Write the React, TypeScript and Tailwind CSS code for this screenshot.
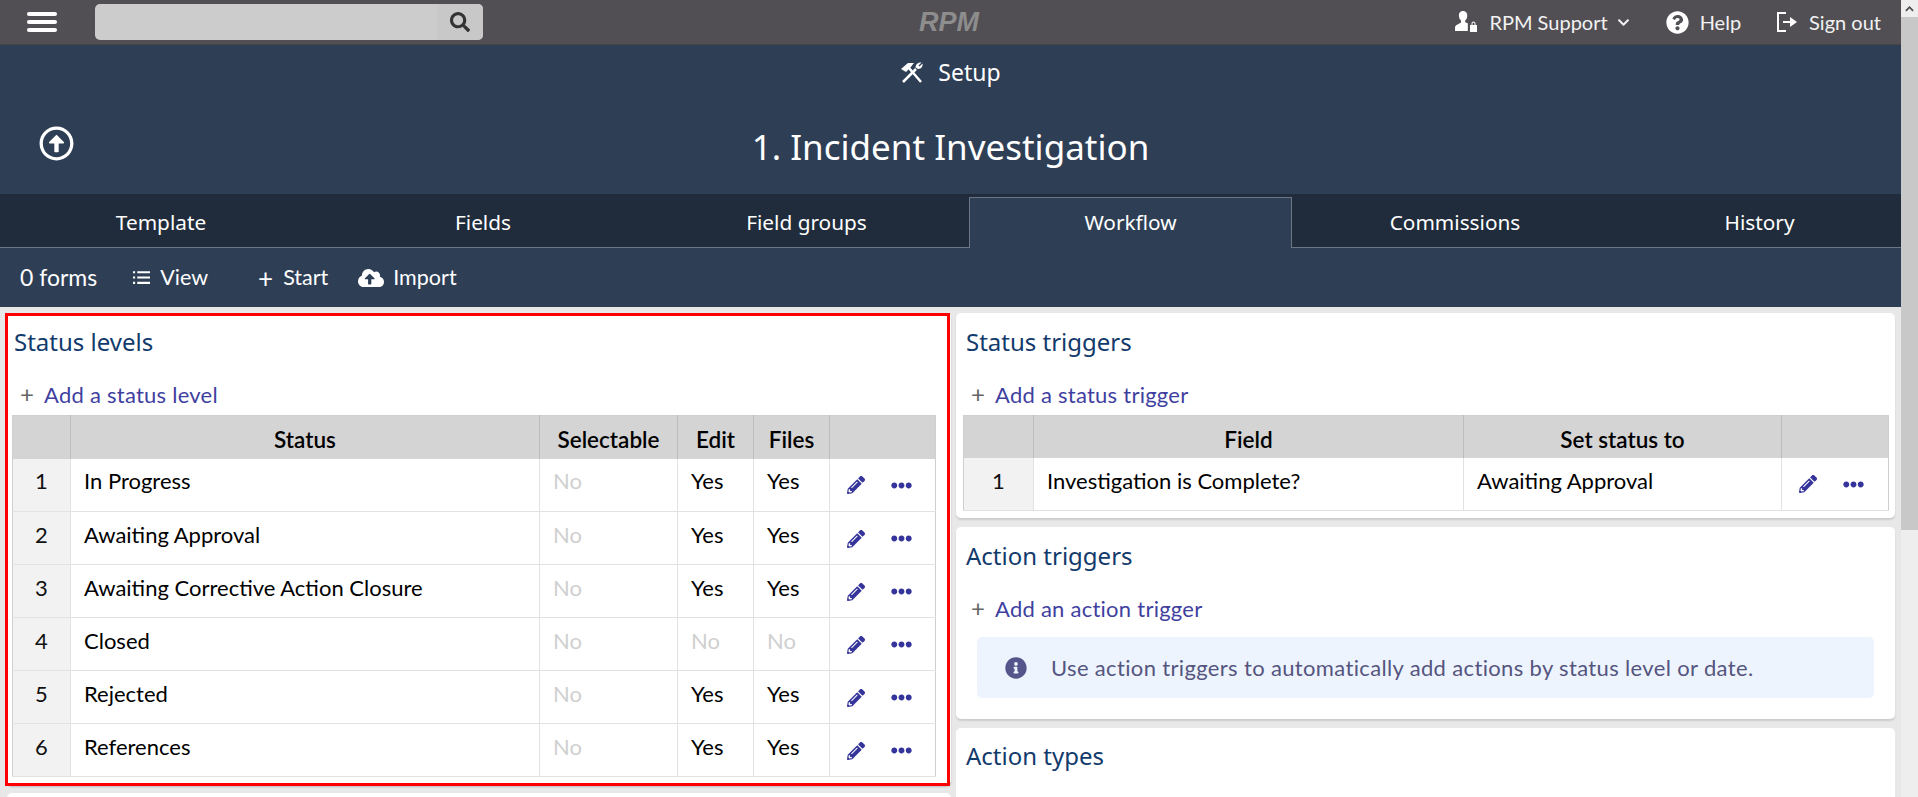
import React from 'react';
import {
  FaSearch,
  FaRegArrowAltCircleUp,
  FaQuestionCircle,
  FaChevronDown,
  FaCloudUploadAlt,
  FaInfoCircle,
  FaEllipsisH,
  FaPencilAlt,
} from 'react-icons/fa';

const tabs = ['Template', 'Fields', 'Field groups', 'Workflow', 'Commissions', 'History'];

const levels = [
  { name: 'In Progress', edit: 'Yes', files: 'Yes' },
  { name: 'Awaiting Approval', edit: 'Yes', files: 'Yes' },
  { name: 'Awaiting Corrective Action Closure', edit: 'Yes', files: 'Yes' },
  { name: 'Closed', edit: 'No', files: 'No' },
  { name: 'Rejected', edit: 'Yes', files: 'Yes' },
  { name: 'References', edit: 'Yes', files: 'Yes' },
];

const YesNo = ({ value }: { value: string }) => (
  <td className={`border-r border-b border-[#e2e2e2] pl-[13px] pb-[8px] ${value === 'No' ? 'text-[#cfcfcf]' : 'text-black'}`}>{value}</td>
);

const RowActions = () => (
  <td className="border-b border-[#e2e2e2]">
    <div className="flex items-center pl-[17px] pt-[1px] text-[#34349a]">
      <FaPencilAlt className="w-[18px] h-[18px]" />
      <FaEllipsisH className="w-[21px] h-[21px] ml-[26px]" />
    </div>
  </td>
);

const AddLink = ({ label }: { label: string }) => (
  <div className="flex items-center h-[28px] pl-[8px] text-[22px] tracking-[0.25px] text-[#3f3f9f]">
    <span className="text-[#666] w-[24px] text-[24px] leading-none">+</span>
    {label}
  </div>
);

const PanelTitle = ({ children }: { children: React.ReactNode }) => (
  <h2 className="text-[24px] leading-[30px] text-[#123a6b] font-['Noto_Sans',sans-serif]">{children}</h2>
);

const HeadCell = ({ children, className = '' }: { children?: React.ReactNode; className?: string }) => (
  <th className={`border-r border-[#bdbdbd] font-semibold text-center text-[22.500px] text-black pt-[6px] ${className}`}>{children}</th>
);

const App = () => {
  return (
    <div className="flex h-[797px] overflow-hidden bg-[#e8e8e8] font-['Lato',sans-serif]">
      <div className="w-[1901px] shrink-0">
        {/* top bar */}
        <div className="flex items-center h-[45px] bg-[#514f54] border-b border-[#444] text-[#f2f2f2] text-[20px]">
          <div className="flex flex-col gap-[4px] w-[30px] ml-[27px]">
            <span className="h-[4px] rounded bg-white" />
            <span className="h-[4px] rounded bg-white" />
            <span className="h-[4px] rounded bg-white" />
          </div>
          <div className="flex ml-[38px] w-[388px] h-[36px] rounded-[5px] bg-[#cccccc] overflow-hidden">
            <div className="flex-1" />
            <div className="flex items-center justify-center w-[46px] bg-[#c8c8c8] text-[#333]">
              <FaSearch className="w-[20px] h-[20px]" />
            </div>
          </div>
          <div className="ml-[436px] w-[54px] text-center font-['Liberation_Sans',sans-serif] italic font-bold text-[27px] text-[#8d8d8d]">RPM</div>
          <div className="flex items-center ml-auto">
            <svg viewBox="0 0 24 24" className="w-[24px] h-[24px] fill-white">
              <path d="M9 1c3 0 4.600 2.400 4.200 5.400-.2 1.800-1 3.200-2 4.100v1.700l2.600 1.100V21H1v-3.200c0-1.700 1-2.800 2.600-3.400l3.400-1.800v-2.100c-1-.9-1.800-2.300-2-4.100C4.600 3.400 6 1 9 1z" />
              <path d="M16 15h7v7h-7zM17.500 15v-1.500a2 2 0 0 1 4 0V15h-1v-1.500a1 1 0 0 0-2 0V15z" />
            </svg>
            <span className="ml-[11px]">RPM Support</span>
            <FaChevronDown className="w-[13px] h-[13px] ml-[9px]" />
            <FaQuestionCircle className="w-[23px] h-[23px] ml-[36px] text-white" />
            <span className="ml-[11px]">Help</span>
            <svg viewBox="0 0 24 24" className="w-[24px] h-[24px] ml-[34px] fill-none stroke-white stroke-2">
              <path d="M11 3H3v18h8M8 12h8" />
              <path d="M15 7l7 5-7 5z" className="fill-white stroke-none" />
            </svg>
            <span className="ml-[10px] mr-[20px]">Sign out</span>
          </div>
        </div>

        {/* title */}
        <div className="relative h-[149px] bg-[#2e3e55] text-white font-['Noto_Sans',sans-serif]">
          <div className="flex items-center justify-center gap-[14px] pt-[10px] text-[23px]">
            <svg viewBox="0 0 24 24" className="w-[24px] h-[24px] fill-none stroke-white stroke-[2.500]">
              <path d="M21 22L9 8M3 22L16 9" />
              <path d="M1 9l7-6 6 0-4 5-4 4z" className="fill-white stroke-none" />
              <path d="M21.500 2.500l-3 3 1 1 3-3c.5 2.500-1 5.500-4.500 5.500L15.500 7.500C15.500 4 19 2 21.500 2.500z" className="fill-white stroke-none" />
            </svg>
            Setup
          </div>
          <FaRegArrowAltCircleUp className="absolute left-[39px] top-[81px] w-[35px] h-[35px]" />
          <h1 className="text-center text-[35px] leading-[50px] mt-[32px]">1. Incident Investigation</h1>
        </div>

        {/* tabs */}
        <div className="grid grid-cols-[322px_322px_325px_323px_326px_283px] h-[54px] bg-[#202c3b] border-b border-[#6c7684] text-white text-[20.800px] font-['Noto_Sans',sans-serif]">
          {tabs.map((tab) => (
            <div
              key={tab}
              className={`flex items-center justify-center ${tab === 'Workflow' ? 'bg-[#2e3e55] border border-b-0 border-[#6c7684] mt-[3px] -mb-px' : 'pt-[4px]'}`}
            >
              {tab}
            </div>
          ))}
        </div>

        {/* toolbar */}
        <div className="flex items-center h-[59px] bg-[#2e3e55] text-white text-[21.500px]">
          <span className="ml-[20px] text-[23px]">0 forms</span>
          <svg viewBox="0 0 16 12" className="w-[17px] h-[13px] ml-[36px] fill-white">
            <path d="M0 0h2v2H0zM4 0h12v2H4zM0 5h2v2H0zM4 5h12v2H4zM0 10h2v2H0zM4 10h12v2H4z" />
          </svg>
          <span className="ml-[10px]">View</span>
          <span className="ml-[50px] text-[26px] leading-none">+</span>
          <span className="ml-[10px]">Start</span>
          <FaCloudUploadAlt className="w-[26px] h-[26px] ml-[30px]" />
          <span className="ml-[9px]">Import</span>
        </div>

        {/* panels */}
        <div className="grid grid-cols-[944px_939px] gap-x-[5px] px-[7px] pt-[6px] text-[22px]">
          <div className="flex flex-col gap-[8px]">
            <div className="relative h-[472px] bg-white rounded-[5px] px-[5px] pt-[14px] shadow-[0_2px_2px_#bbb]">
              <div className="absolute -left-[2px] top-0 w-[945px] h-[473px] border-[3px] border-[#ff0000] pointer-events-none" />
              <div className="pl-[2px]"><PanelTitle>Status levels</PanelTitle></div>
              <div className="mt-[23px]"><AddLink label="Add a status level" /></div>
              <table className="table-fixed w-[923px] mt-[7px] border border-[#cfcfcf] border-collapse">
                <thead>
                  <tr className="h-[43px] bg-[#d4d4d4]">
                    <HeadCell className="w-[58px]" />
                    <HeadCell className="w-[469px]">Status</HeadCell>
                    <HeadCell className="w-[138px]">Selectable</HeadCell>
                    <HeadCell className="w-[76px]">Edit</HeadCell>
                    <HeadCell className="w-[76px]">Files</HeadCell>
                    <th className="w-[106px]" />
                  </tr>
                </thead>
                <tbody>
                  {levels.map((level, index) => (
                    <tr key={level.name} className="h-[53px]">
                      <td className="bg-[#f2f2f2] text-center border-r border-b border-[#e2e2e2] text-[#111] pb-[8px]">{index + 1}</td>
                      <td className="pl-[13px] pb-[8px] border-r border-b border-[#e2e2e2] text-black">{level.name}</td>
                      <YesNo value="No" />
                      <YesNo value={level.edit} />
                      <YesNo value={level.files} />
                      <RowActions />
                    </tr>
                  ))}
                </tbody>
              </table>
            </div>
            <div className="h-[20px] bg-white rounded-[5px]" />
          </div>

          <div className="flex flex-col gap-[9px]">
            <div className="h-[205px] bg-white rounded-[5px] px-[7px] pt-[14px] shadow-[0_2px_2px_#ccc]">
              <div className="pl-[3px]"><PanelTitle>Status triggers</PanelTitle></div>
              <div className="mt-[23px]"><AddLink label="Add a status trigger" /></div>
              <table className="table-fixed w-[925px] mt-[7px] border border-[#cfcfcf] border-collapse">
                <thead>
                  <tr className="h-[42px] bg-[#d4d4d4]">
                    <HeadCell className="w-[70px]" />
                    <HeadCell className="w-[430px]">Field</HeadCell>
                    <HeadCell className="w-[318px]">Set status to</HeadCell>
                    <th className="w-[107px]" />
                  </tr>
                </thead>
                <tbody>
                  <tr className="h-[53px]">
                    <td className="bg-[#f2f2f2] text-center border-r border-b border-[#e2e2e2] text-[#111] pb-[6px]">1</td>
                    <td className="pl-[13px] pb-[6px] border-r border-b border-[#e2e2e2] text-black">Investigation is Complete?</td>
                    <td className="pl-[13px] pb-[6px] border-r border-b border-[#e2e2e2] text-black">Awaiting Approval</td>
                    <RowActions />
                  </tr>
                </tbody>
              </table>
            </div>

            <div className="h-[192px] bg-white rounded-[5px] px-[7px] pt-[14px] shadow-[0_2px_2px_#ccc]">
              <div className="pl-[3px]"><PanelTitle>Action triggers</PanelTitle></div>
              <div className="mt-[23px]"><AddLink label="Add an action trigger" /></div>
              <div className="flex items-center h-[61px] mt-[15px] mx-[14px] px-[28px] rounded-[5px] bg-[#edf4fd] text-[#55557f] tracking-[0.35px]">
                <FaInfoCircle className="w-[22px] h-[22px] text-[#55558b]" />
                <span className="ml-[24px]">Use action triggers to automatically add actions by status level or date.</span>
              </div>
            </div>

            <div className="h-[80px] bg-white rounded-[5px] px-[7px] pt-[13px]">
              <div className="pl-[3px]"><PanelTitle>Action types</PanelTitle></div>
            </div>
          </div>
        </div>
      </div>

      {/* page scrollbar */}
      <div className="flex flex-col w-[17px] shrink-0 bg-[#eeeeee]">
        <div className="flex items-center justify-center h-[17px] text-[#505050]">
          <svg viewBox="0 0 10 6" className="w-[9px] h-[6px] fill-none stroke-current stroke-2">
            <path d="M1 5l4-4 4 4" />
          </svg>
        </div>
        <div className="h-[513px] bg-[#c8c8c8]" />
      </div>
    </div>
  );
};

export default App;
